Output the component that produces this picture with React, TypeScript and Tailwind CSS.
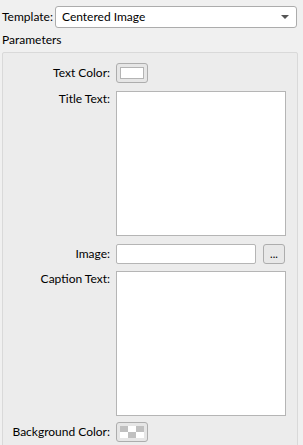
import React from 'react';

const Label = ({ children, top }: { children: React.ReactNode; top?: boolean }) => (
    <div className={`w-[113px] shrink-0 pr-[6px] text-right whitespace-nowrap ${top ? 'leading-[15px]' : 'leading-[20px]'}`}>
        {children}
    </div>
);

const ColorSwatch = ({ checker }: { checker?: boolean }) => (
    <div className="w-[32px] h-[20px] rounded-[3px] border border-[#adadad] bg-[#e6e6e6] flex items-center justify-center">
        {checker ? (
            <div className="w-[24px] h-[12px] grid grid-cols-3 grid-rows-2">
                <div className="bg-[#c0c0c0]" />
                <div className="bg-white" />
                <div className="bg-[#c0c0c0]" />
                <div className="bg-white" />
                <div className="bg-[#c0c0c0]" />
                <div className="bg-white" />
            </div>
        ) : (
            <div className="w-[24px] h-[12px] bg-white border border-[#b4b4b4]" />
        )}
    </div>
);

export default function App() {
    return (
        <div className="w-[303px] h-[445px] overflow-hidden bg-[#f0f0f0] text-[12px] text-black font-['Lato',sans-serif] select-none">
            {/* Template row */}
            <div className="flex items-center pt-[6px] pl-[2px] pr-[6px]">
                <span className="w-[53px] shrink-0 whitespace-nowrap">Template:</span>
                <div className="flex-1 h-[22px] rounded-[3px] border border-[#acacac] bg-white flex items-center justify-between pl-[6px] pr-[7px]">
                    <span>Centered Image</span>
                    <svg width="8" height="4" viewBox="0 0 8 4"><path d="M0 0h8L4 4z" fill="#555" /></svg>
                </div>
            </div>

            {/* Parameters */}
            <div className="pl-[2px] mt-[4px] leading-[16px]">Parameters</div>

            <div className="ml-[2px] mr-[5px] mt-[4px] h-[400px] rounded-t-[2px] border border-[#d9d9d9] bg-[#ececec] pt-[10px] flex flex-col gap-[8px]">
                <div className="flex">
                    <Label>Text Color:</Label>
                    <ColorSwatch />
                </div>
                <div className="flex">
                    <Label top>Title Text:</Label>
                    <div className="w-[170px] h-[145px] border border-[#b5b5b5] bg-white" />
                </div>
                <div className="flex">
                    <Label>Image:</Label>
                    <div className="w-[140px] h-[20px] rounded-[2px] border border-[#b5b5b5] bg-white" />
                    <div className="ml-[7px] w-[22px] h-[20px] rounded-[3px] border border-[#adadad] bg-[#e8e8e8] flex items-center justify-center text-[11px] leading-none pb-[2px]">...</div>
                </div>
                <div className="flex -mt-[1px]">
                    <Label top>Caption Text:</Label>
                    <div className="w-[170px] h-[145px] border border-[#b5b5b5] bg-white" />
                </div>
                <div className="flex -mt-[2px]">
                    <Label>Background Color:</Label>
                    <ColorSwatch checker />
                </div>
            </div>
        </div>
    );
}
